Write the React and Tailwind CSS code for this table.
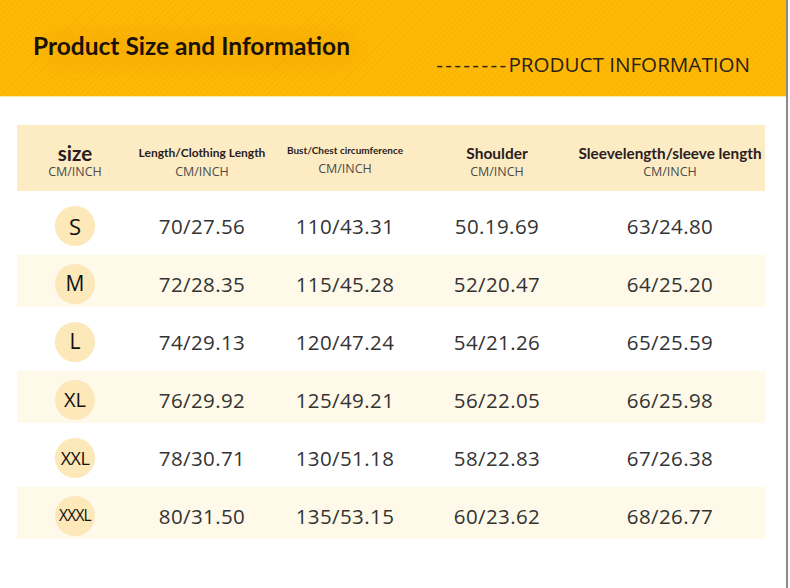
const cols = [
  { title: 'size', size: 'text-[20.5px]' },
  { title: 'Length/Clothing Length', size: 'text-[12px]' },
  { title: 'Bust/Chest circumference', size: 'text-[10px] -mt-[3px]' },
  { title: 'Shoulder', size: 'text-[15.5px]' },
  { title: 'Sleevelength/sleeve length', size: 'text-[15.3px]' },
];

const rows = [
  { size: 'S', fs: 'text-[22px]', vals: ['70/27.56', '110/43.31', '50.19.69', '63/24.80'] },
  { size: 'M', fs: 'text-[21px]', vals: ['72/28.35', '115/45.28', '52/20.47', '64/25.20'] },
  { size: 'L', fs: 'text-[21px]', vals: ['74/29.13', '120/47.24', '54/21.26', '65/25.59'] },
  { size: 'XL', fs: 'text-[20px]', vals: ['76/29.92', '125/49.21', '56/22.05', '66/25.98'] },
  { size: 'XXL', fs: 'text-[18px] tracking-[-0.6px]', vals: ['78/30.71', '130/51.18', '58/22.83', '67/26.38'] },
  { size: 'XXXL', fs: 'text-[15.5px] tracking-[-0.8px]', vals: ['80/31.50', '135/53.15', '60/23.62', '68/26.77'] },
];

const grid = 'grid grid-cols-[116px_138px_148px_156px_190px]';

export default function App() {
  return (
    <div className="flex h-[588px] w-[790px] bg-white font-['Open_Sans',sans-serif]">
      <div className="w-[788px] border-r-2 border-[#8a8a8a]">
        <Banner />
        <div className="ml-[17px] mt-[28px] w-[748px]">
          <div className={`${grid} h-[66px] bg-[#fdecc3]`}>
            {cols.map((c) => (
              <div key={c.title} className="flex flex-col items-center pt-[17px]">
                <span className={`font-['Lato',sans-serif] font-bold leading-[22px] text-[#2a1c22] ${c.size}`}>{c.title}</span>
                <span className="text-[12.5px] leading-[16px] text-[#4a4a4a]">CM/INCH</span>
              </div>
            ))}
          </div>
          {rows.map((r, i) => (
            <div key={r.size} className={`${grid} items-center pt-[6px] ${i % 2 ? 'h-[52px] bg-[#fef9e9]' : 'h-[64px]'}`}>
              <div className="flex justify-center">
                <span className={`flex h-[40px] w-[40px] items-center justify-center rounded-full bg-[#fce8b8] text-[#111] ${r.fs}`}>
                  {r.size}
                </span>
              </div>
              {r.vals.map((v, j) => (
                <div key={j} className="text-center text-[20.5px] tracking-[0.4px] text-[#333]">
                  {v}
                </div>
              ))}
            </div>
          ))}
        </div>
      </div>
    </div>
  );
}

function Banner() {
  return (
    <div className="relative flex h-[97px] items-start justify-between overflow-hidden border-b border-[#fde9a8] bg-[repeating-linear-gradient(135deg,#feb906_0px,#feb906_3px,#f8b304_3px,#f8b304_4px)]">
      <div className="absolute left-[40px] top-[30px] h-[40px] w-[320px] rounded-full bg-[#f5a800] opacity-50 blur-[10px]" />
      <h1 className="relative pl-[33px] pt-[31px] font-['Lato',sans-serif] text-[24.5px] font-bold leading-[30px] text-[#1a1208]">
        Product Size and Information
      </h1>
      <p className="relative pr-[36px] pt-[51px] text-[20.6px] leading-[26px] text-[#2b2218]">
        <span className="tracking-[2.4px]">--------</span>PRODUCT INFORMATION
      </p>
    </div>
  );
}
